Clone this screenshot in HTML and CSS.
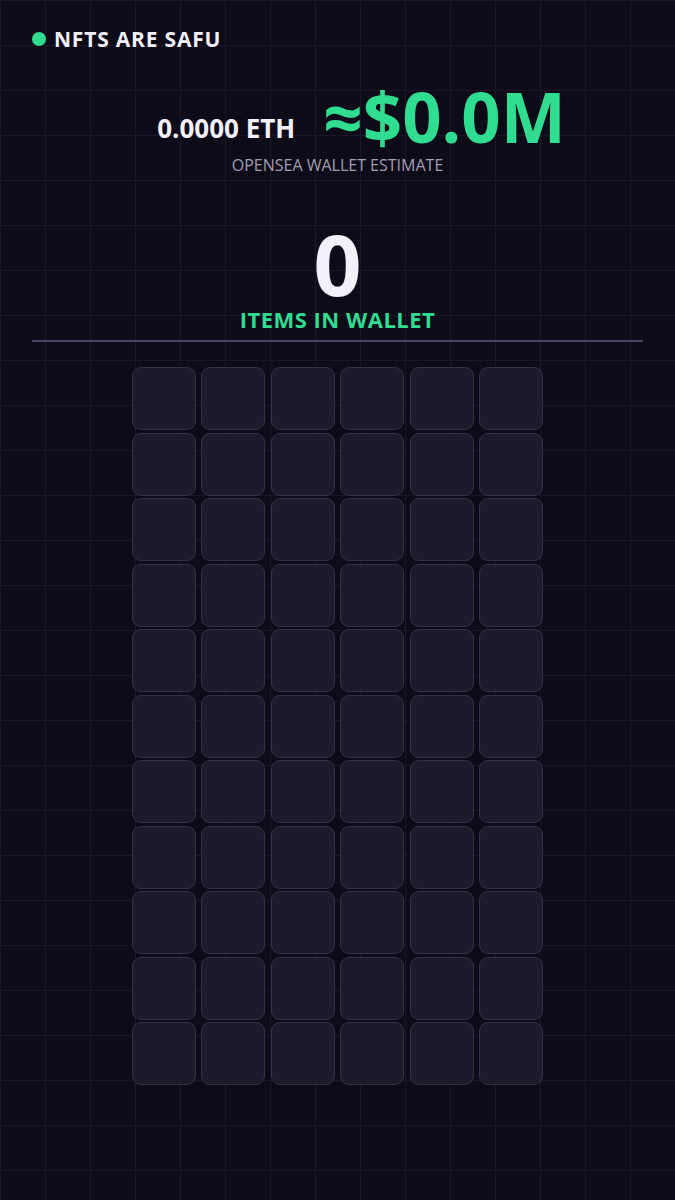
FILE: index.html
```html
<!DOCTYPE html>
<html lang="en">
<head>
  <meta charset="UTF-8" />
  <meta name="viewport" content="width=device-width, initial-scale=1.0"/>
  <title>NFTs Are Safu</title>
  <link rel="stylesheet" href="styles.css">
</head>
<body>
  <header class="brand">
    <span class="brand-dot"></span>
    <span class="brand-name">NFTS ARE SAFU</span>
  </header>

  <section class="estimate">
    <div class="price-row"><span class="eth">0.0000 ETH</span><span class="usd">&asymp;$0.0M</span></div>
    <div class="estimate-label">OPENSEA WALLET ESTIMATE</div>
  </section>

  <section class="count">
    <div class="count-num">0</div>
    <div class="count-label">ITEMS IN WALLET</div>
  </section>

  <hr class="divider" />

  <div class="slots">
    <div class="slot"></div><div class="slot"></div><div class="slot"></div><div class="slot"></div><div class="slot"></div><div class="slot"></div>
    <div class="slot"></div><div class="slot"></div><div class="slot"></div><div class="slot"></div><div class="slot"></div><div class="slot"></div>
    <div class="slot"></div><div class="slot"></div><div class="slot"></div><div class="slot"></div><div class="slot"></div><div class="slot"></div>
    <div class="slot"></div><div class="slot"></div><div class="slot"></div><div class="slot"></div><div class="slot"></div><div class="slot"></div>
    <div class="slot"></div><div class="slot"></div><div class="slot"></div><div class="slot"></div><div class="slot"></div><div class="slot"></div>
    <div class="slot"></div><div class="slot"></div><div class="slot"></div><div class="slot"></div><div class="slot"></div><div class="slot"></div>
    <div class="slot"></div><div class="slot"></div><div class="slot"></div><div class="slot"></div><div class="slot"></div><div class="slot"></div>
    <div class="slot"></div><div class="slot"></div><div class="slot"></div><div class="slot"></div><div class="slot"></div><div class="slot"></div>
    <div class="slot"></div><div class="slot"></div><div class="slot"></div><div class="slot"></div><div class="slot"></div><div class="slot"></div>
    <div class="slot"></div><div class="slot"></div><div class="slot"></div><div class="slot"></div><div class="slot"></div><div class="slot"></div>
    <div class="slot"></div><div class="slot"></div><div class="slot"></div><div class="slot"></div><div class="slot"></div><div class="slot"></div>
  </div>
</body>
</html>
```

FILE: styles.css
```css
* {
  margin: 0;
  padding: 0;
  box-sizing: border-box;
  font-family: 'Open Sans', 'Noto Sans', sans-serif;
}

body {
  background-color: #0e0b19;
  background-image:
    linear-gradient(to right, #1b1728 1px, transparent 1px),
    linear-gradient(to bottom, #1b1728 1px, transparent 1px);
  background-size: 45px 45px;
  min-height: 1200px;
  color: #f2f0fa;
}

.brand {
  display: flex;
  align-items: center;
  gap: 8px;
  padding: 25px 0 0 32px;
  height: 53px;
}

.brand-dot {
  width: 14px;
  height: 14px;
  border-radius: 50%;
  background: #30dc90;
}

.brand-name {
  font-size: 21px;
  line-height: 28px;
  font-weight: 700;
  letter-spacing: 0.8px;
}

.estimate {
  margin-top: 29px;
  text-align: center;
}

.price-row {
  font-size: 69px;
  line-height: 68px;
  padding-left: 48px;
  white-space: nowrap;
}

.eth {
  font-size: 26px;
  line-height: 1;
  font-weight: 700;
  vertical-align: 5px;
  margin-right: 28px;
}

.usd {
  display: inline-block;
  font-weight: 700;
  color: #30dc90;
}

.estimate-label {
  margin-top: 5px;
  font-size: 16px;
  line-height: 20px;
  color: #a19eb0;
}

.count {
  margin-top: 47px;
  text-align: center;
}

.count-num {
  font-size: 84px;
  line-height: 84px;
  font-weight: 700;
}

.count-label {
  font-size: 22px;
  line-height: 26px;
  font-weight: 700;
  letter-spacing: 0.5px;
  color: #30dc90;
}

.divider {
  border: none;
  height: 2px;
  background: #4f4068;
  margin: 8px 32px 0;
}

.slots {
  display: grid;
  grid-template-columns: repeat(6, 64px);
  grid-auto-rows: 63px;
  column-gap: 5.4px;
  row-gap: 2.5px;
  justify-content: center;
  margin-top: 25px;
}

.slot {
  background: #1e1a2b;
  border: 1px solid #34304a;
  border-radius: 9px;
}
```
